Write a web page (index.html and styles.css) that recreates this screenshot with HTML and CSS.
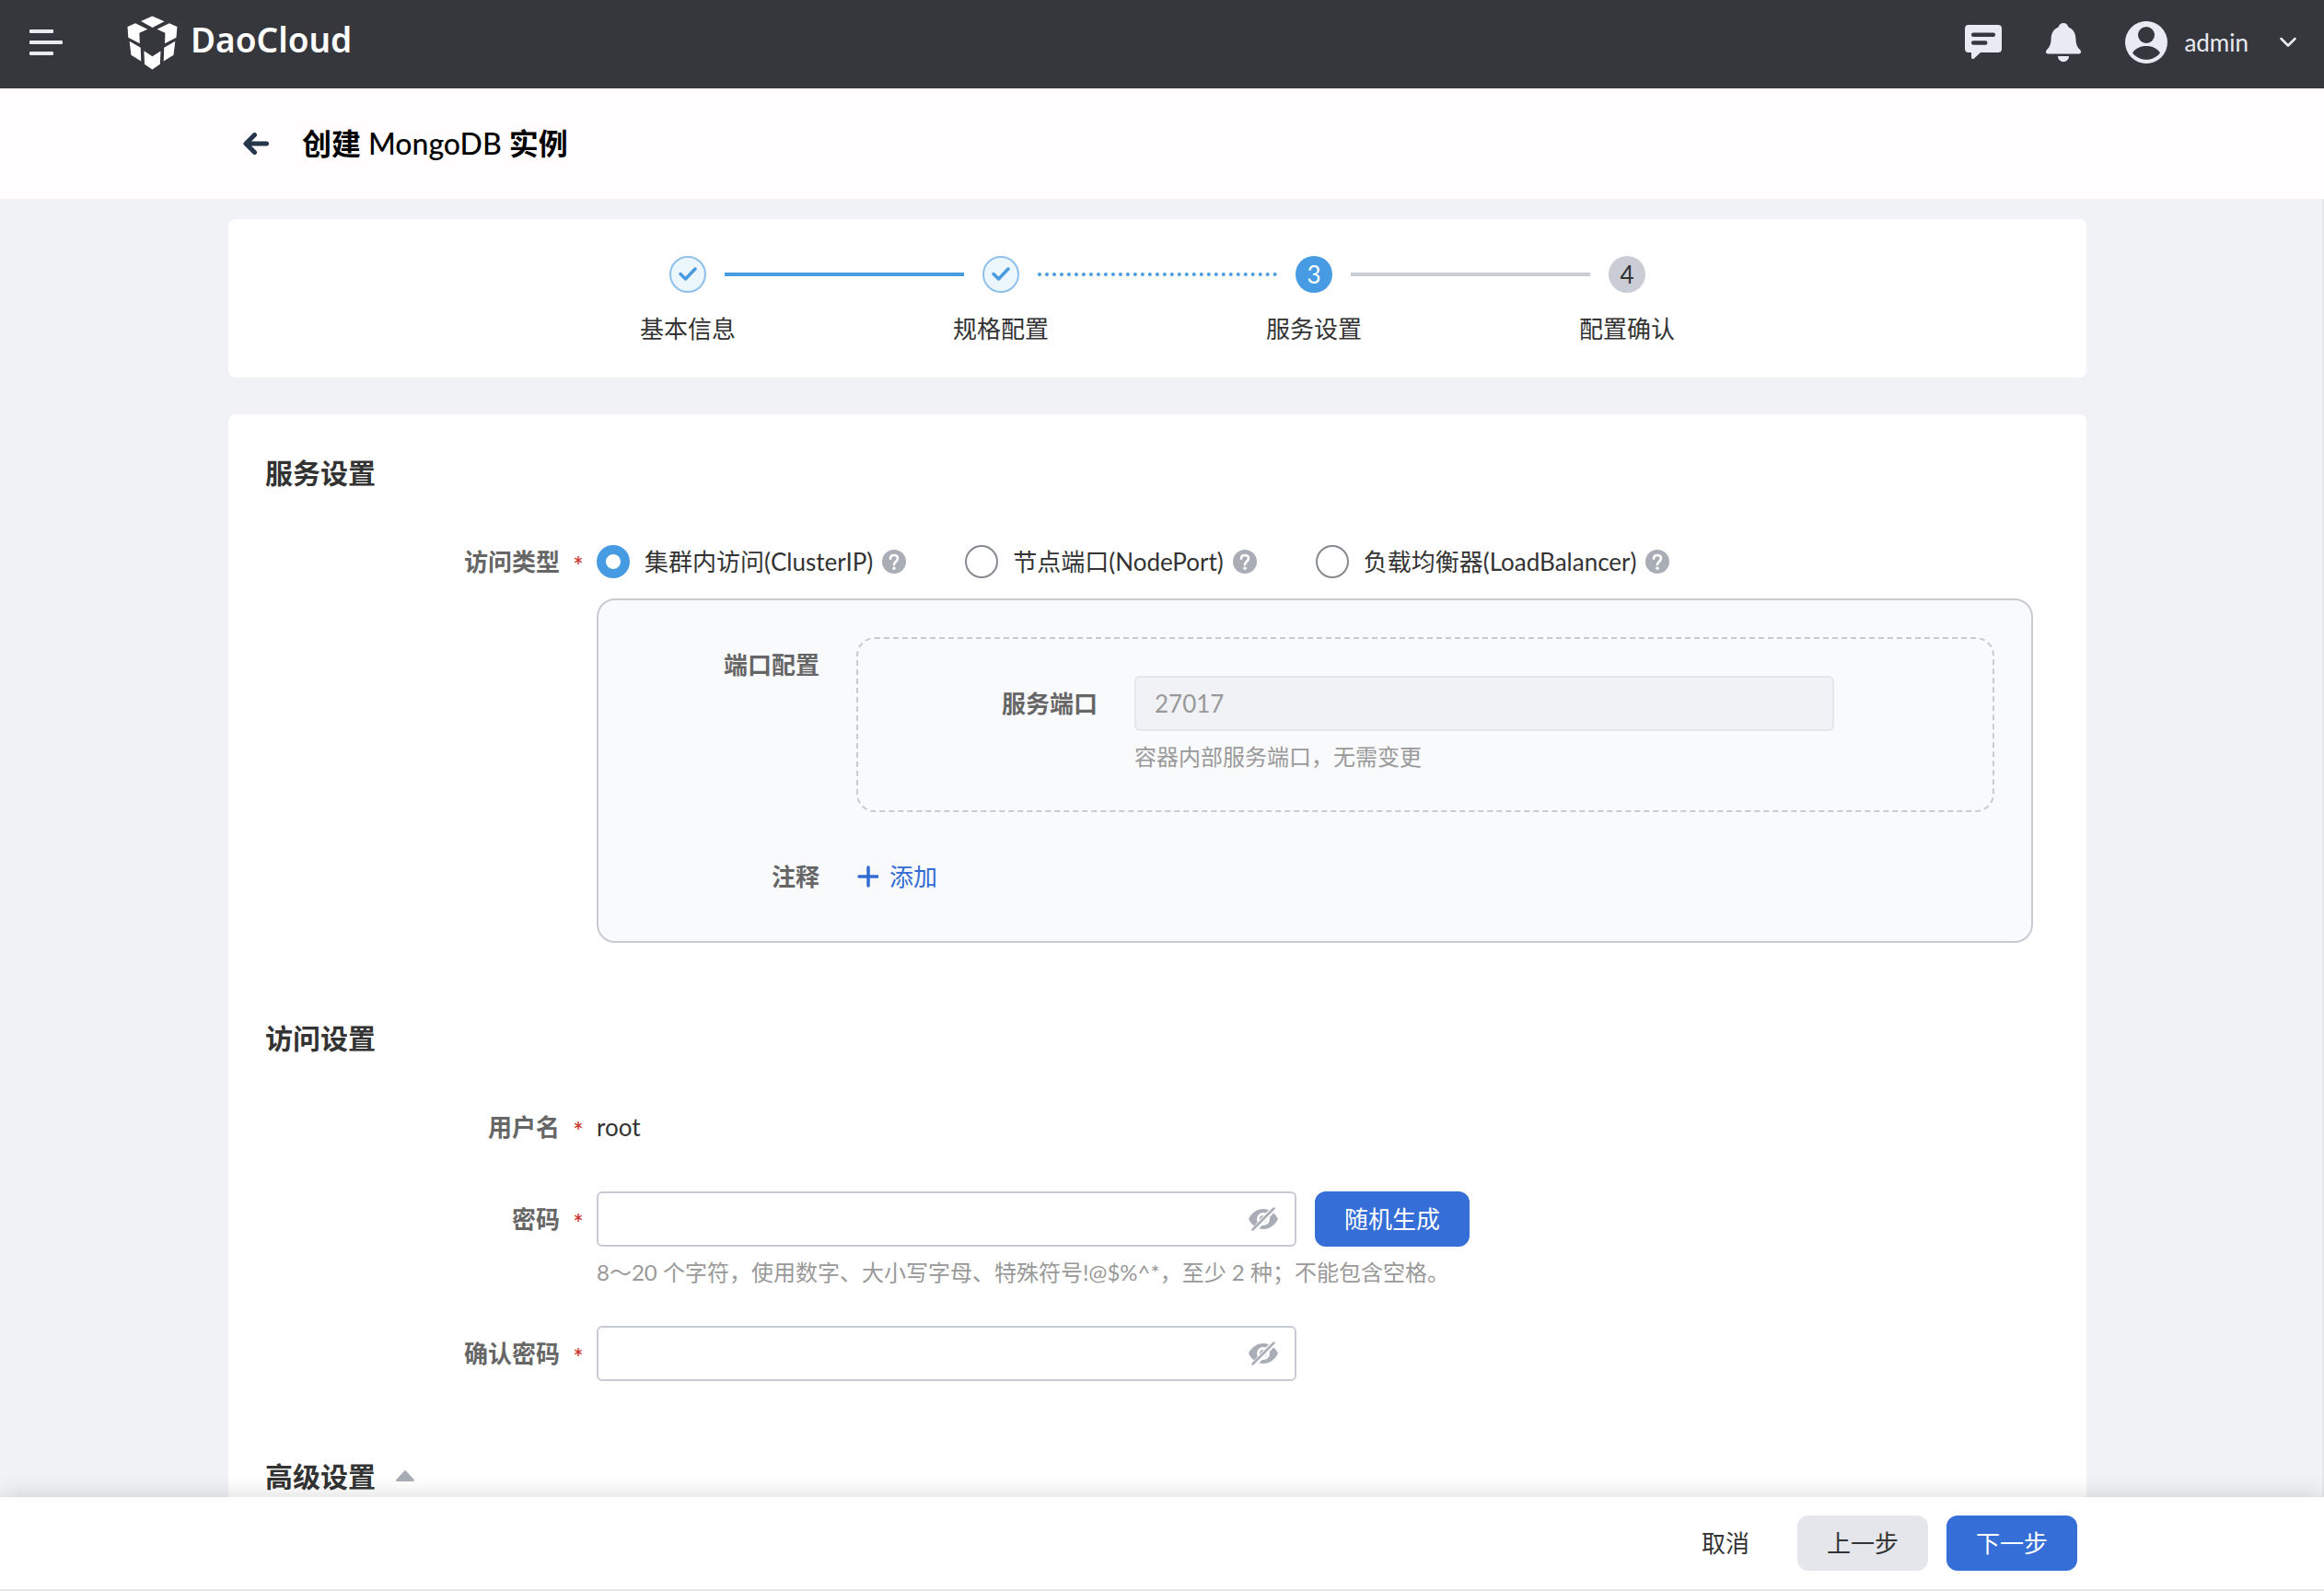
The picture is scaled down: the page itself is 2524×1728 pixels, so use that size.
FILE: index.html
```html
<!DOCTYPE html>
<html lang="zh-CN">
<head>
    <meta charset="UTF-8">
    <meta name="viewport" content="width=device-width, initial-scale=1.0">
    <title>创建 MongoDB 实例</title>
    <link rel="stylesheet" href="styles.css">
</head>
<body>

    <header class="topbar">
        <button type="button" class="icon-btn menu-btn" aria-label="菜单">
            <svg width="36" height="28" viewBox="0 0 36 28" fill="currentColor">
                <rect width="26" height="4" rx="1"/>
                <rect y="12" width="36" height="4" rx="1"/>
                <rect y="24" width="26" height="4" rx="1"/>
            </svg>
        </button>
        <a href="#" class="logo">
            <svg width="55" height="59" viewBox="138 16 55 59" fill="currentColor" aria-hidden="true">
                <path d="M153 22 165.4 16.6 178.6 22.2 165.6 29z"/>
                <path d="M138.5 28 147 24.3 160.3 30.7 151.4 34.7 151.8 46.3 139.3 39.7z"/>
                <path d="M192.4 28 183.8 24.3 170.5 30.7 179.4 34.7 179 46.3 191.5 39.7z"/>
                <path d="M140.6 43.7 152.7 50.7 153.2 65.5 142.4 58.7z"/>
                <path d="M190.3 43.7 178.2 50.7 177.7 65.5 188.5 58.7z"/>
                <path d="M156.4 54.3 165.4 60.3 174.5 54.5 173.8 68.7 165.4 74.4 157 68.7z"/>
            </svg>
            <span class="logo-text">DaoCloud</span>
        </a>
        <div class="topbar-right">
            <button type="button" class="icon-btn" aria-label="消息">
                <svg width="40" height="38" viewBox="0 0 40 38">
                    <path fill="currentColor" d="M4 0h32a4 4 0 0 1 4 4v22a4 4 0 0 1-4 4H17l-7 6.500c-1.500 1.200-3 .500-3-1.500v-5H4a4 4 0 0 1-4-4V4a4 4 0 0 1 4-4z"/>
                    <path stroke="#36373c" stroke-width="4.500" stroke-linecap="round" d="M9.200 10.700h21.600M9.200 19.400h13"/>
                </svg>
            </button>
            <button type="button" class="icon-btn" aria-label="通知">
                <svg width="38" height="42" viewBox="0 0 38 42" fill="currentColor">
                    <path d="M19 0c2.800 0 4.700 1.700 5.600 4.600 5 2.300 7.600 6.300 7.800 12.400.200 5.500 1 8.500 4.600 12 1.700 1.900 1.300 4.500-1.200 4.500H2.200C-.300 33.500-.700 30.900 1 29c3.600-3.500 4.400-6.500 4.600-12C5.800 10.900 8.400 6.900 13.400 4.600 14.300 1.700 16.200 0 19 0z"/>
                    <path d="M13 36h12c0 3.600-2.600 6-6 6s-6-2.400-6-6z"/>
                </svg>
            </button>
            <button type="button" class="icon-btn user-btn">
                <svg width="46" height="46" viewBox="0 0 46 46">
                    <circle cx="23" cy="23" r="23" fill="currentColor"/>
                    <circle cx="23" cy="15" r="9" fill="#36373c"/>
                    <path fill="#36373c" d="M8 34.500C11 29.500 16.500 27 23 27s12 2.500 15 7.500c-3.600 4.600-9 7.300-15 7.300s-11.400-2.700-15-7.300z"/>
                </svg>
                <span class="user-name">admin</span>
                <svg class="chevron" width="18" height="12" viewBox="0 0 18 12" fill="none" stroke="currentColor" stroke-width="2.500" stroke-linecap="round" stroke-linejoin="round">
                    <path d="M1.500 2 9 9.500 16.500 2"/>
                </svg>
            </button>
        </div>
    </header>

    <div class="page-title">
        <a href="#" class="back" aria-label="返回">
            <svg width="28" height="24" viewBox="0 0 28 24" fill="none" stroke="currentColor" stroke-width="5" stroke-linecap="round" stroke-linejoin="round">
                <path d="M12.500 2.500 3 12l9.500 9.500M4 12h21.500"/>
            </svg>
        </a>
        <h1>创建 <span class="latin">MongoDB</span> 实例</h1>
    </div>

    <main class="content">
        <ol class="card steps">
            <li class="step done">
                <div class="step-head">
                    <span class="step-icon">
                        <svg width="20" height="16" viewBox="0 0 20 16" fill="none" stroke="currentColor" stroke-width="3.500" stroke-linecap="round" stroke-linejoin="round">
                            <path d="M2 7.500 7.500 13 18 2"/>
                        </svg>
                    </span>
                    <span class="step-line"></span>
                </div>
                <div class="step-label">基本信息</div>
            </li>
            <li class="step done next-active">
                <div class="step-head">
                    <span class="step-icon">
                        <svg width="20" height="16" viewBox="0 0 20 16" fill="none" stroke="currentColor" stroke-width="3.500" stroke-linecap="round" stroke-linejoin="round">
                            <path d="M2 7.500 7.500 13 18 2"/>
                        </svg>
                    </span>
                    <span class="step-line"></span>
                </div>
                <div class="step-label">规格配置</div>
            </li>
            <li class="step active">
                <div class="step-head">
                    <span class="step-icon">3</span>
                    <span class="step-line"></span>
                </div>
                <div class="step-label">服务设置</div>
            </li>
            <li class="step">
                <div class="step-head">
                    <span class="step-icon">4</span>
                </div>
                <div class="step-label">配置确认</div>
            </li>
        </ol>

        <form class="card form" id="create-form">
            <section>
                <h2>服务设置</h2>
                <div class="row" role="radiogroup" aria-labelledby="type-label">
                    <span class="label" id="type-label">访问类型<span class="required">*</span></span>
                    <div class="radios">
                        <div class="radio">
                            <input type="radio" name="type" id="type-cluster" checked>
                            <label for="type-cluster">集群内访问(ClusterIP)</label>
                            <svg class="help" viewBox="0 0 26 26">
                                <circle cx="13" cy="13" r="13" fill="#a9adb5"/>
                                <path fill="none" stroke="#fff" stroke-width="2.600" stroke-linecap="round" d="M9 9.800C9 7.300 10.700 6 13 6s4 1.400 4 3.600c0 3.200-4 3.500-4 6.600"/>
                                <circle cx="13" cy="20.300" r="1.700" fill="#fff"/>
                            </svg>
                        </div>
                        <div class="radio">
                            <input type="radio" name="type" id="type-node">
                            <label for="type-node">节点端口(NodePort)</label>
                            <svg class="help" viewBox="0 0 26 26">
                                <circle cx="13" cy="13" r="13" fill="#a9adb5"/>
                                <path fill="none" stroke="#fff" stroke-width="2.600" stroke-linecap="round" d="M9 9.800C9 7.300 10.700 6 13 6s4 1.400 4 3.600c0 3.200-4 3.500-4 6.600"/>
                                <circle cx="13" cy="20.300" r="1.700" fill="#fff"/>
                            </svg>
                        </div>
                        <div class="radio">
                            <input type="radio" name="type" id="type-lb">
                            <label for="type-lb">负载均衡器(LoadBalancer)</label>
                            <svg class="help" viewBox="0 0 26 26">
                                <circle cx="13" cy="13" r="13" fill="#a9adb5"/>
                                <path fill="none" stroke="#fff" stroke-width="2.600" stroke-linecap="round" d="M9 9.800C9 7.300 10.700 6 13 6s4 1.400 4 3.600c0 3.200-4 3.500-4 6.600"/>
                                <circle cx="13" cy="20.300" r="1.700" fill="#fff"/>
                            </svg>
                        </div>
                    </div>
                </div>

                <div class="panel">
                    <div class="row">
                        <span class="label">端口配置</span>
                        <div class="ports">
                            <div class="row">
                                <label class="label" for="port">服务端口</label>
                                <div class="field">
                                    <input type="text" class="text-input" id="port" value="27017" disabled>
                                    <p class="hint">容器内部服务端口，无需变更</p>
                                </div>
                            </div>
                        </div>
                    </div>
                    <div class="row">
                        <span class="label">注释</span>
                        <button type="button" class="add-btn">
                            <svg width="24" height="24" viewBox="0 0 24 24" fill="none" stroke="currentColor" stroke-width="3.500" stroke-linecap="round">
                                <path d="M13 2v20M3 12h20"/>
                            </svg>
                            添加
                        </button>
                    </div>
                </div>
            </section>

            <section>
                <h2>访问设置</h2>
                <div class="row">
                    <span class="label">用户名<span class="required">*</span></span>
                    <span class="value">root</span>
                </div>
                <div class="row">
                    <label class="label" for="password">密码<span class="required">*</span></label>
                    <div class="field">
                        <div class="inline">
                            <div class="password">
                                <input type="password" class="text-input" id="password">
                                <button type="button" class="eye-btn" aria-label="显示密码">
                                    <svg width="32" height="26" viewBox="0 0 32 26">
                                        <path fill="currentColor" d="M0 13C4 5.500 9.500 2 16 2s12 3.500 16 11c-4 7.500-9.500 11-16 11S4 20.500 0 13z"/>
                                        <circle cx="16" cy="13" r="5.500" fill="currentColor" stroke="#fff" stroke-width="3"/>
                                        <path stroke="#fff" stroke-width="6" d="M4 27 30-1"/>
                                        <path stroke="currentColor" stroke-width="2.500" stroke-linecap="round" d="M4.500 24.500 27.500 1.500"/>
                                    </svg>
                                </button>
                            </div>
                            <button type="button" class="btn primary">随机生成</button>
                        </div>
                        <p class="hint">8～20 个字符，使用数字、大小写字母、特殊符号!@$%^*，至少 2 种；不能包含空格。</p>
                    </div>
                </div>
                <div class="row">
                    <label class="label" for="confirm">确认密码<span class="required">*</span></label>
                    <div class="password">
                        <input type="password" class="text-input" id="confirm">
                        <button type="button" class="eye-btn" aria-label="显示密码">
                            <svg width="32" height="26" viewBox="0 0 32 26">
                                <path fill="currentColor" d="M0 13C4 5.500 9.500 2 16 2s12 3.500 16 11c-4 7.500-9.500 11-16 11S4 20.500 0 13z"/>
                                <circle cx="16" cy="13" r="5.500" fill="currentColor" stroke="#fff" stroke-width="3"/>
                                <path stroke="#fff" stroke-width="6" d="M4 27 30-1"/>
                                <path stroke="currentColor" stroke-width="2.500" stroke-linecap="round" d="M4.500 24.500 27.500 1.500"/>
                            </svg>
                        </button>
                    </div>
                </div>
            </section>

            <section>
                <h2>
                    高级设置
                    <button type="button" class="collapse-btn" aria-label="收起">
                        <svg width="20" height="12" viewBox="0 0 20 12" fill="currentColor">
                            <path d="M9 .500q1-.800 2 0l8.600 9.500q.800 2-1 2H1.400q-1.800 0-1-2z"/>
                        </svg>
                    </button>
                </h2>
            </section>
        </form>
    </main>

    <footer class="footer">
        <button type="button" class="btn text">取消</button>
        <button type="button" class="btn">上一步</button>
        <button type="submit" form="create-form" class="btn primary">下一步</button>
    </footer>

</body>
</html>
```
FILE: styles.css
```css
* {
    box-sizing: border-box;
}
body {
    margin: 0;
    height: 100vh;
    display: flex;
    flex-direction: column;
    overflow: hidden;
    font-family: Lato, "Noto Sans CJK SC", sans-serif;
    font-size: 26px;
    line-height: 38px;
    color: #333;
    background-color: #f1f2f6;
}
h1, h2, p, ol {
    margin: 0;
    padding: 0;
}
button, input {
    font: inherit;
    color: inherit;
}
button {
    padding: 0;
    border: 0;
    background: none;
    cursor: pointer;
}
svg {
    display: block;
    flex-shrink: 0;
}

/* top bar */
.topbar {
    height: 96px;
    flex-shrink: 0;
    display: flex;
    align-items: center;
    padding: 0 30px 4px 32px;
    background-color: #36373c;
    color: #e9ebf3;
}
.icon-btn {
    display: flex;
    align-items: center;
}
.logo {
    display: flex;
    align-items: center;
    gap: 14px;
    margin-left: 70px;
    color: #fff;
    text-decoration: none;
}
.logo-text {
    padding-bottom: 6px;
    font-family: "Noto Sans", sans-serif;
    font-size: 37px;
    font-weight: 600;
    line-height: 50px;
}
.topbar-right {
    display: flex;
    align-items: center;
    gap: 48px;
    margin-left: auto;
}
.user-name {
    margin: 0 34px 0 18px;
}

/* page title */
.page-title {
    height: 120px;
    flex-shrink: 0;
    display: flex;
    align-items: center;
    gap: 36px;
    padding: 0 264px;
    background-color: #fffdfe;
}
.page-title h1 {
    font-size: 32px;
    font-weight: 600;
    line-height: 46px;
    color: #000;
}
.page-title .latin {
    font-weight: 500;
}
.back {
    color: #25364d;
}

/* content */
.content {
    flex: 1;
    min-height: 0;
    overflow: hidden;
    padding: 22px 256px 0 248px;
    border-right: 2px solid #e6e7ea;
}
.card {
    background-color: #fff;
    border-radius: 8px;
}
.steps {
    display: flex;
    justify-content: center;
    padding: 40px 0 34px;
    margin-bottom: 40px;
    list-style: none;
}
.step {
    width: 340px;
}
.step:last-child {
    width: 40px;
}
.step-head {
    display: flex;
    align-items: center;
    gap: 20px;
}
.step-icon {
    width: 40px;
    height: 40px;
    display: flex;
    align-items: center;
    justify-content: center;
    border-radius: 50%;
    background-color: #cacdd6;
}
.step-line {
    width: 260px;
    border-top: 4px solid #c9cdd6;
}
.step-label {
    width: 40px;
    margin-top: 20px;
    display: flex;
    justify-content: center;
    white-space: nowrap;
}
.done .step-icon {
    border: 2px solid #8fc1ea;
    background-color: #ecf6fd;
    color: #4a9ae0;
}
.done .step-line {
    border-color: #4a9ce0;
}
.next-active .step-line {
    border-top-style: dotted;
}
.active .step-icon {
    background-color: #469be2;
    color: #fff;
}

/* form */
.form {
    padding: 40px 58px 40px 40px;
}
.form section + section {
    margin-top: 80px;
}
.form h2 {
    display: flex;
    align-items: center;
    font-size: 30px;
    font-weight: 600;
    line-height: 46px;
}
.form h2 + .row {
    margin-top: 44px;
}
.row {
    display: flex;
    align-items: flex-start;
}
.row + .row {
    margin-top: 40px;
}
.label {
    width: 360px;
    height: 60px;
    flex-shrink: 0;
    display: flex;
    justify-content: flex-end;
    padding-right: 40px;
    font-weight: 600;
    line-height: 60px;
    color: #666;
}
.required {
    width: 40px;
    margin-right: -40px;
    line-height: 68px;
    text-align: center;
    color: #c9352d;
}
.value {
    line-height: 60px;
}
.radios {
    display: flex;
    gap: 64px;
}
.radio {
    display: flex;
    align-items: center;
    height: 60px;
}
.radio input {
    appearance: none;
    width: 36px;
    height: 36px;
    margin: 0 16px 0 0;
    border: 2px solid #86898f;
    border-radius: 50%;
    background-color: #fff;
}
.radio input:checked {
    border: 10px solid #469be2;
}
.help {
    width: 26px;
    height: 26px;
    margin-left: 10px;
}
.panel {
    margin: 10px 0 0 360px;
    padding: 40px 40px 40px 0;
    border: 2px solid #c9cbd4;
    border-radius: 20px;
    background-color: #f9fafc;
}
.panel .label {
    width: 280px;
}
.ports {
    flex: 1;
    padding: 40px 0;
    border: 2px dashed #c9cbd4;
    border-radius: 20px;
}
.ports .label {
    width: 300px;
}
.text-input {
    display: block;
    width: 760px;
    height: 60px;
    padding: 0 20px;
    border: 2px solid #c9cbd4;
    border-radius: 6px;
    background-color: #fff;
}
.text-input:disabled {
    border-color: #e4e6eb;
    background-color: #f1f2f6;
    color: #999;
}
.hint {
    margin-top: 10px;
    font-size: 24px;
    line-height: 36px;
    color: #999;
}
.add-btn {
    height: 60px;
    display: flex;
    align-items: center;
    gap: 12px;
    color: #336bd4;
}
.inline {
    display: flex;
    gap: 20px;
}
.password {
    position: relative;
}
.password .text-input {
    padding-right: 64px;
}
.eye-btn {
    position: absolute;
    top: 0;
    right: 20px;
    height: 60px;
    color: #a9adb5;
}
.collapse-btn {
    margin-left: 22px;
    color: #a9adb5;
}

/* buttons */
.btn {
    height: 60px;
    padding: 0 32px;
    border-radius: 12px;
    background-color: #e5e6eb;
}
.btn.primary {
    background-color: #346ed6;
    color: #fff;
}
.btn.text {
    background: none;
}

/* footer */
.footer {
    position: relative;
    height: 102px;
    flex-shrink: 0;
    display: flex;
    align-items: center;
    justify-content: flex-end;
    gap: 20px;
    padding: 0 268px;
    background-color: #fff;
    border-bottom: 2px solid #e6e6e6;
    box-shadow: 0 0 24px rgba(0, 0, 0, 0.16);
}
```
